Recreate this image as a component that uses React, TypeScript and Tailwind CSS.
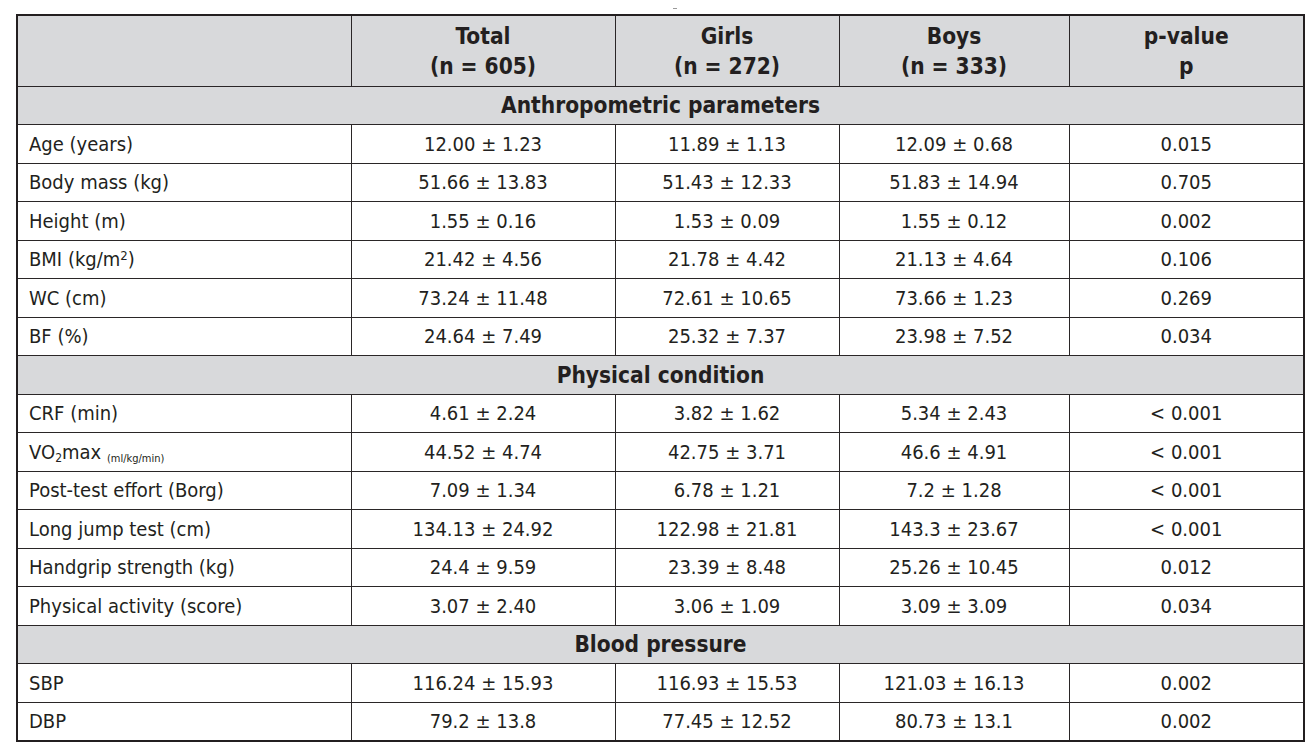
type Row = { label: React.ReactNode; total: string; girls: string; boys: string; p: string };

const sections: { title: string; rows: Row[] }[] = [
  {
    title: 'Anthropometric parameters',
    rows: [
      { label: 'Age (years)', total: '12.00 ± 1.23', girls: '11.89 ± 1.13', boys: '12.09 ± 0.68', p: '0.015' },
      { label: 'Body mass (kg)', total: '51.66 ± 13.83', girls: '51.43 ± 12.33', boys: '51.83 ± 14.94', p: '0.705' },
      { label: 'Height (m)', total: '1.55 ± 0.16', girls: '1.53 ± 0.09', boys: '1.55 ± 0.12', p: '0.002' },
      {
        label: (
          <>
            BMI (kg/m<sup className="text-[13px]">2</sup>)
          </>
        ),
        total: '21.42 ± 4.56',
        girls: '21.78 ± 4.42',
        boys: '21.13 ± 4.64',
        p: '0.106',
      },
      { label: 'WC (cm)', total: '73.24 ± 11.48', girls: '72.61 ± 10.65', boys: '73.66 ± 1.23', p: '0.269' },
      { label: 'BF (%)', total: '24.64 ± 7.49', girls: '25.32 ± 7.37', boys: '23.98 ± 7.52', p: '0.034' },
    ],
  },
  {
    title: 'Physical condition',
    rows: [
      { label: 'CRF (min)', total: '4.61 ± 2.24', girls: '3.82 ± 1.62', boys: '5.34 ± 2.43', p: '< 0.001' },
      {
        label: (
          <>
            VO<sub className="text-[12px]">2</sub>max <sub className="text-[11px] relative top-[3px]">(ml/kg/min)</sub>
          </>
        ),
        total: '44.52 ± 4.74',
        girls: '42.75 ± 3.71',
        boys: '46.6 ± 4.91',
        p: '< 0.001',
      },
      { label: 'Post-test effort (Borg)', total: '7.09 ± 1.34', girls: '6.78 ± 1.21', boys: '7.2 ± 1.28', p: '< 0.001' },
      { label: 'Long jump test (cm)', total: '134.13 ± 24.92', girls: '122.98 ± 21.81', boys: '143.3 ± 23.67', p: '< 0.001' },
      { label: 'Handgrip strength (kg)', total: '24.4 ± 9.59', girls: '23.39 ± 8.48', boys: '25.26 ± 10.45', p: '0.012' },
      { label: 'Physical activity (score)', total: '3.07 ± 2.40', girls: '3.06 ± 1.09', boys: '3.09 ± 3.09', p: '0.034' },
    ],
  },
  {
    title: 'Blood pressure',
    rows: [
      { label: 'SBP', total: '116.24 ± 15.93', girls: '116.93 ± 15.53', boys: '121.03 ± 16.13', p: '0.002' },
      { label: 'DBP', total: '79.2 ± 13.8', girls: '77.45 ± 12.52', boys: '80.73 ± 13.1', p: '0.002' },
    ],
  },
];

const cell = 'border border-[#2a2627] h-[38.5px] p-0 leading-none';

export default function App() {
  return (
    <div className="bg-white w-[1315px] h-[749px] font-['DejaVu_Sans_Condensed',sans-serif] text-[#231f20]">
      <div className="h-[14px] pl-[673px] pt-[8px]">
        <div className="w-[4px] h-[1px] bg-[#9a9a9a]" />
      </div>
      <table className="ml-[16px] w-[1287px] table-fixed border-collapse border-2 border-[#231f20]">
        <colgroup>
          <col className="w-[334px]" />
          <col className="w-[264px]" />
          <col className="w-[224px]" />
          <col className="w-[230px]" />
          <col className="w-[235px]" />
        </colgroup>
        <thead>
          <tr className="bg-[#d8d9db] h-[71px] text-[22.5px] font-bold">
            <th className="border border-[#2a2627]" />
            {[
              ['Total', '(n = 605)'],
              ['Girls', '(n = 272)'],
              ['Boys', '(n = 333)'],
              ['p-value', 'p'],
            ].map(([a, b]) => (
              <th key={a} className="border border-[#2a2627] text-center leading-[30px] pt-[1px]">
                <div>{a}</div>
                <div>{b}</div>
              </th>
            ))}
          </tr>
        </thead>
        <tbody className="text-[20px]">
          {sections.map((s) => (
            <>
              <tr key={s.title} className="bg-[#d8d9db]">
                <td colSpan={5} className={`${cell} text-center font-bold text-[22.5px]`}>
                  {s.title}
                </td>
              </tr>
              {s.rows.map((r, i) => (
                <tr key={s.title + i}>
                  <td className={`${cell} pl-[11px] text-left`}>{r.label}</td>
                  <td className={`${cell} text-center`}>{r.total}</td>
                  <td className={`${cell} text-center`}>{r.girls}</td>
                  <td className={`${cell} text-center`}>{r.boys}</td>
                  <td className={`${cell} text-center`}>{r.p}</td>
                </tr>
              ))}
            </>
          ))}
        </tbody>
      </table>
    </div>
  );
}
